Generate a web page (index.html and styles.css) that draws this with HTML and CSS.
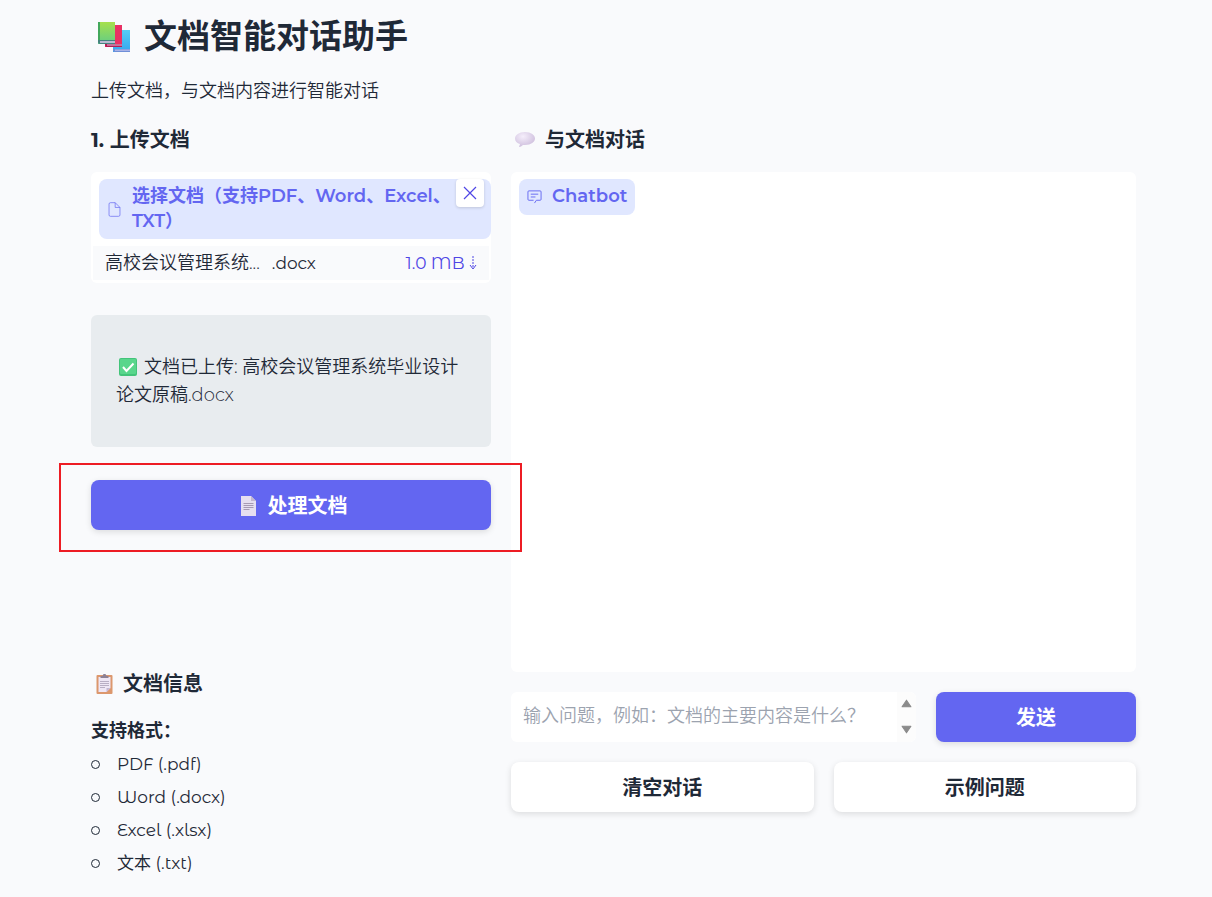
FILE: index.html
```html
<!DOCTYPE html>
<html lang="zh-CN">
<head>
<meta charset="utf-8">
<title>文档智能对话助手</title>
<link rel="stylesheet" href="styles.css">
</head>
<body>
<main class="app">
  <header>
    <h1 class="title">
      <svg class="books" viewBox="0 0 34 34" aria-hidden="true">
        <defs>
          <linearGradient id="green" x2="0" y2="1"><stop stop-color="#a6e04c"/><stop offset="1" stop-color="#62cc86"/></linearGradient>
          <linearGradient id="blue" x2="0" y2="1"><stop stop-color="#56cdf4"/><stop offset="1" stop-color="#35a6ee"/></linearGradient>
        </defs>
        <path d="M16 11h17v22H16z" fill="url(#blue)"/>
        <path d="M16 30h17v3H18q-2 0-2-2z" fill="#6f8fd8"/><path d="M18 30.500h15v1.500H18z" fill="#a9b3e6"/>
        <path d="M8 6h17v22H8z" fill="#e93063"/>
        <path d="M8 25h17v3H10q-2 0-2-2z" fill="#b51c55"/><path d="M10 25.500h15v1H10z" fill="#d9c5df"/>
        <path d="M1 3h17v22H1z" fill="url(#green)"/><path d="M1 3h2v20H1z" fill="#43a85b"/>
        <path d="M1 21h17v4H3q-2 0-2-2z" fill="#45837f"/><path d="M3 22h15v2H3z" fill="#b9bad2"/>
      </svg>
      文档智能对话助手
    </h1>
    <p class="intro">上传文档，与文档内容进行智能对话</p>
  </header>

  <div class="columns">
    <!-- 左侧：上传 -->
    <section class="left">
      <h3>1. 上传文档</h3>
      <div class="upload">
        <div class="upload-label">
          <svg class="label-icon" viewBox="3 1 18 22" aria-hidden="true"><path d="M13 2H6a2 2 0 0 0-2 2v16a2 2 0 0 0 2 2h12a2 2 0 0 0 2-2V9zM13 2v7h7"/></svg>
          <span>选择文档（支持PDF、Word、Excel、TXT）</span>
        </div>
        <button class="close" type="button" aria-label="清除">
          <svg viewBox="0 0 16 16" aria-hidden="true"><path d="M2 2l12 12M14 2L2 14"/></svg>
        </button>
        <table class="files">
          <tr>
            <td><span class="stem">高校会议管理系统...</span><span class="ext">.docx</span></td>
            <td class="size"><a href="#">1.0 MB
              <svg viewBox="0 0 8 16" aria-hidden="true"><path d="M4 1v11" stroke-dasharray="2 1"/><path d="M1 10l3 4 3-4"/></svg></a></td>
          </tr>
        </table>
      </div>

      <div class="status">
        <p><svg class="check" viewBox="0 0 18 18" aria-hidden="true"><rect width="18" height="18" rx="2" fill="#43c47a"/><rect x="1" y="1" width="16" height="15" rx="1" fill="#59d68c"/><path d="M4 9l3.500 4L14.500 5.500" fill="none" stroke="#fff" stroke-width="2"/></svg>文档已上传: 高校会议管理系统毕业设计论文原稿.docx</p>
      </div>

      <div class="process">
        <button class="btn primary" type="button">
          <svg class="page" viewBox="0 0 15 20" aria-hidden="true"><path d="M0 0h10l5 5v15H0z" fill="#e6dff0"/><path d="M10 0l5 5h-5z" fill="#c3b7d0"/><path d="M2.500 7.500h10M2.500 9.500h10M2.500 11.500h10M2.500 13.500h6" stroke="#a79ab3"/></svg>
          处理文档
        </button>
        <span class="marker"></span>
      </div>

      <div class="info">
        <h3>
          <svg class="clipboard" viewBox="0 0 16 20" aria-hidden="true"><rect y="1" width="16" height="19" rx="1" fill="#dc976d"/><path d="M2 3h12v11l-4 4H2z" fill="#eee6f5"/><path d="M10 18v-4h4z" fill="#c5b7d2"/><path d="M4 4V2h2l1-2h2l1 2h2v2z" fill="#8d8195"/><path d="M3.500 7.500h9M3.500 9.500h9M3.500 11.500h9M3.500 13.500h5" stroke="#aaa0b8" stroke-width=".8"/></svg>
          文档信息
        </h3>
        <p class="formats-title">支持格式：</p>
        <ul class="formats">
          <li>PDF (.pdf)</li>
          <li>Word (.docx)</li>
          <li>Excel (.xlsx)</li>
          <li>文本 (.txt)</li>
        </ul>
      </div>
    </section>

    <!-- 右侧：对话 -->
    <section class="right">
      <h3>
        <svg class="bubble" viewBox="0 0 20 16" aria-hidden="true">
          <defs><radialGradient id="speech" cx=".4" cy=".3" r=".8"><stop stop-color="#f5eefb"/><stop offset="1" stop-color="#c9b8d9"/></radialGradient></defs>
          <path d="M10 0c6 0 10 3 10 6.500S16 13 10 13H8q-2 2-4 2l1-3C2 11 0 9.500 0 6.500 0 3 4 0 10 0z" fill="url(#speech)"/>
        </svg>
        与文档对话
      </h3>
      <div class="chat">
        <div class="chat-label">
          <svg class="label-icon" viewBox="0 0 16 16" aria-hidden="true"><path d="M8 15l2-3h4a1 1 0 0 0 1-1V3a1 1 0 0 0-1-1H2a1 1 0 0 0-1 1v8a1 1 0 0 0 1 1h5M4 5.500h8M4 8.500h5"/></svg>
          <span>Chatbot</span>
        </div>
      </div>
      <div class="ask">
        <div class="question">
          <textarea rows="1" aria-label="问题" placeholder="输入问题，例如：文档的主要内容是什么？"></textarea>
          <span class="arrows">
            <svg viewBox="0 0 10 8" aria-hidden="true"><path d="M5 1l4 6H1z"/></svg>
            <svg viewBox="0 0 10 8" aria-hidden="true"><path d="M1 1h8L5 7z"/></svg>
          </span>
        </div>
        <button class="btn primary send" type="button">发送</button>
      </div>
      <div class="actions">
        <button class="btn" type="button">清空对话</button>
        <button class="btn" type="button">示例问题</button>
      </div>
    </section>
  </div>
</main>
</body>
</html>
```

FILE: styles.css
```css
* { box-sizing: border-box; }
body {
  margin: 0;
  background: #f9fafc;
  color: #1f2937;
  font: 350 18px/28px "Montserrat Alternates", Montserrat, Inter, "Noto Sans CJK SC", sans-serif;
}
h1, h3, p, ul { margin: 0; }
button, textarea { font: inherit; color: inherit; border: 0; }
svg { flex: none; }

.app { padding: 12px 76px 16px 91px; }

/* 标题 */
.title {
  display: flex;
  align-items: center;
  gap: 13px;
  padding-left: 6px;
  font-size: 33px;
  line-height: 48px;
  font-weight: 700;
}
.books { width: 34px; height: 34px; }
.intro { margin-top: 17px; }

.columns {
  display: grid;
  grid-template-columns: 16fr 25fr;
  gap: 20px;
  margin-top: 21px;
}
.left, .right { display: flex; flex-direction: column; min-width: 0; }
h3 {
  display: flex;
  align-items: center;
  gap: 10px;
  font-family: Montserrat, "Noto Sans CJK SC", sans-serif;
  font-size: 20px;
  line-height: 28px;
  font-weight: 700;
}

/* 上传框 */
.upload {
  position: relative;
  margin-top: 18px;
  padding: 7px 0 3px;
  background: #fff;
  border-radius: 6px;
}
.upload-label, .chat-label {
  display: flex;
  align-items: center;
  gap: 10px;
  background: #e0e7ff;
  color: #6366f1;
  border-radius: 8px;
  font-family: Montserrat, "Noto Sans CJK SC", sans-serif;
  font-weight: 600;
  line-height: 25px;
}
.upload-label { margin-left: 8px; padding: 5px 40px 5px 8px; }
.label-icon {
  width: 15px;
  height: 15px;
  fill: none;
  stroke: #6366f1;
  stroke-width: 1;
}
.close {
  position: absolute;
  top: 7px;
  right: 7px;
  display: flex;
  padding: 6px;
  background: #fff;
  border-radius: 4px;
  box-shadow: 0 1px 3px rgba(0, 0, 0, .15);
}
.close svg { width: 16px; height: 16px; fill: none; stroke: #4f46e5; stroke-width: 1.2; }
.files {
  width: calc(100% - 4px);
  margin: 7px 2px 0;
  border-collapse: collapse;
  background: #f9fafc;
}
.files td { padding: 3px 12px; }
.files .stem { margin-right: 12px; }
.ext, .size a, .formats { font-size: 17px; font-weight: 400; }
.files .size { text-align: right; white-space: nowrap; }
.size a { color: #4f46e5; text-decoration: none; }
.size svg { width: 8px; height: 16px; vertical-align: -2px; fill: none; stroke: #4f46e5; }

/* 上传状态 */
.status {
  margin-top: 32px;
  padding: 38px 25px;
  background: #e8ecef;
  border-radius: 6px;
}
.check { width: 18px; height: 18px; margin: 0 7px 0 3px; vertical-align: -3px; }

.btn {
  display: flex;
  align-items: center;
  justify-content: center;
  gap: 12px;
  width: 100%;
  padding: 12px 20px 10px;
  background: #fff;
  border-radius: 8px;
  box-shadow: 0 2px 6px rgba(0, 0, 0, .12);
  font-size: 20px;
  font-weight: 700;
}
.primary { background: #6366f1; color: #fff; }
.page { width: 15px; height: 20px; }

.process { position: relative; margin-top: 33px; }
.process .btn { padding-left: 26px; }
/* 红色标记框 */
.marker {
  position: absolute;
  z-index: 1;
  inset: -17px -31px -22px -32px;
  border: 2px solid #ed1c24;
  pointer-events: none;
}

/* 文档信息 */
.info { margin-top: 140px; }
.info h3 { padding-left: 5px; }
.right h3 { padding-left: 4px; }
.clipboard { width: 17px; height: 20px; }
.formats-title { margin-top: 19px; font-weight: 700; }
.formats { padding: 0; list-style: none; }
.formats li { display: flex; align-items: center; gap: 17px; margin-top: 5px; }
.formats li::before {
  content: "";
  width: 7px;
  height: 7px;
  border: 1px solid #1f2937;
  border-radius: 50%;
}

/* 对话 */
.bubble { width: 20px; height: 16px; }
.chat {
  height: 500px;
  margin-top: 18px;
  padding: 7px 8px;
  background: #fff;
  border-radius: 6px;
}
.chat-label { width: fit-content; padding: 5px 8px 6px; }
.ask { display: flex; gap: 20px; margin-top: 20px; }
.question { position: relative; flex: 1; display: flex; }
.question textarea {
  width: 100%;
  padding: 10px 24px 10px 12px;
  background: #fff;
  border-radius: 6px;
  resize: none;
  overflow: hidden;
}
.question textarea::placeholder { color: #9ca3af; }
.arrows {
  position: absolute;
  inset: 0 0 0 auto;
  width: 19px;
  padding: 7px 4px 8px;
  display: flex;
  flex-direction: column;
  justify-content: space-between;
  background: #fcfcfc;
  border-radius: 0 6px 6px 0;
}
.arrows svg { width: 11px; height: 9px; fill: #8b8b8b; stroke: #8b8b8b; stroke-linejoin: round; }
.send { width: 200px; }
.actions { display: flex; gap: 20px; margin-top: 20px; }
```
